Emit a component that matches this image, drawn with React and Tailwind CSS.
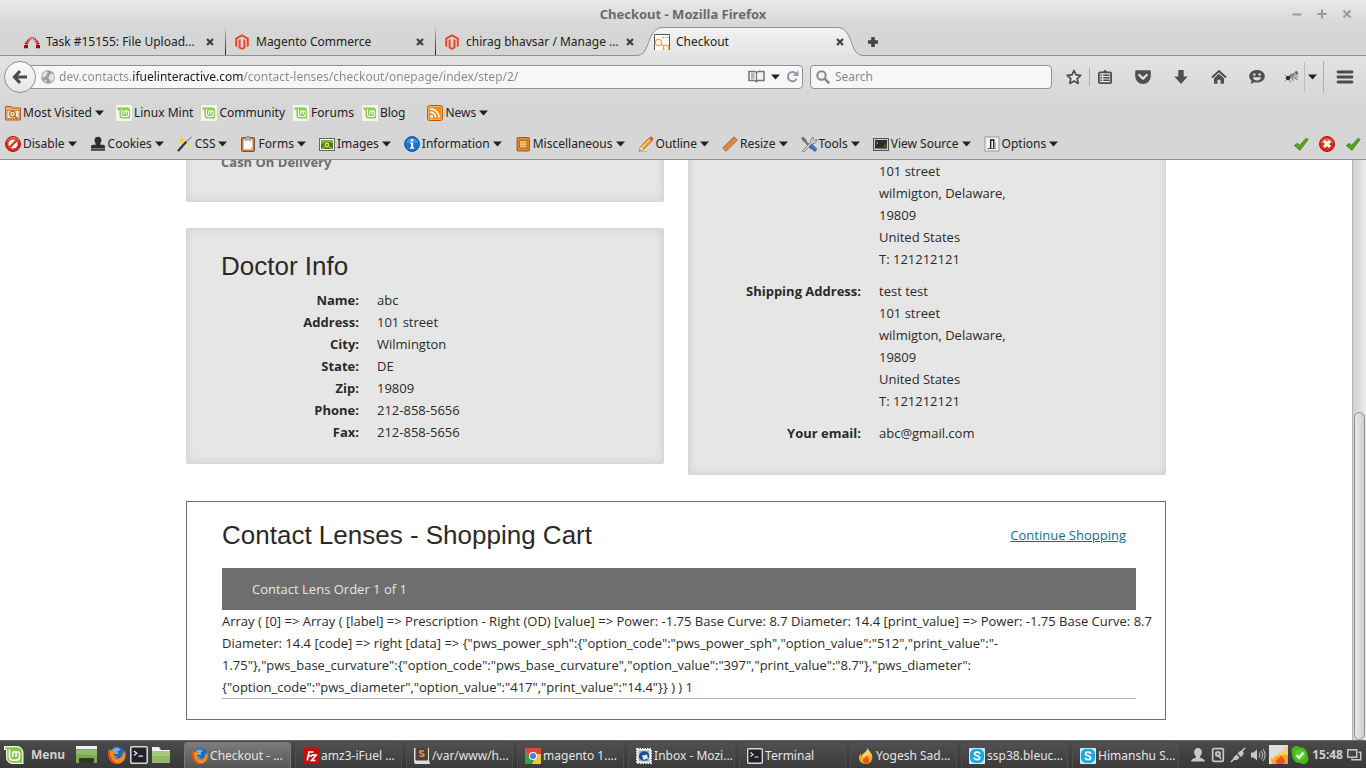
import React from "react";

const Svg = ({ size = 16, box = 16, className = "", children }) => (
  <svg width={size} height={size} viewBox={`0 0 ${box} ${box}`} className={`shrink-0 ${className}`} aria-hidden="true">
    {children}
  </svg>
);

/* ---------- small shared glyphs ---------- */
const Caret = () => (
  <svg width="9" height="6" viewBox="0 0 9 6" className="shrink-0" aria-hidden="true">
    <path d="M0 0.5h9L4.5 5.5z" fill="#222" />
  </svg>
);
const CloseGlyph = () => (
  <Svg size={10} box={10}>
    <path d="M2 2l6 6M8 2L2 8" stroke="#444" strokeWidth="2.4" />
  </Svg>
);

/* ---------- tab icons ---------- */
const RedmineIcon = () => (
  <Svg>
    <path d="M3.800 5.300L5 4l1.400 2.200-.9.800zM6.200 3.200l1.300-.5.200 2.700-.8.300zM8.700 2.700l1.500.3-.8 2.600-.8-.2zM11.200 3.700l1.300 1.200-1.800 1.900-.8-.7z" fill="#d8232a" />
    <path d="M2.200 7.300l1.200-1.600 2 1.800-.8 1.300zM13.100 5.700l1.200 1.700-2.500 1.500-.7-1.300z" fill="#c3161c" />
    <path d="M.6 10l1.200-2.200 2.400 1.500-.6 1.200zM14.600 8l.9 2-2.900.8-.5-1.300z" fill="#b0090f" />
    <path d="M0 11h4v3.200H0zM12 11h4v3.200h-4z" fill="#a3070d" />
  </Svg>
);
const MagentoIcon = () => (
  <Svg>
    <path d="M8 0.200l6.800 3.900v8L12.800 13.300V5.300L8 2.500 3.200 5.300v8L1.200 12.100v-8z" fill="#ee4623" />
    <path d="M4.600 6.100l2-1.200v8.200L8 14l1.400-.9V4.900l2 1.200v8L8 16l-3.400-1.900z" fill="#ee4623" />
  </Svg>
);
const CheckoutIcon = () => (
  <Svg>
    <rect width="16" height="16" fill="#fff" />
    <path d="M.5 16V.5h15V16" fill="none" stroke="#555" />
    <g fill="none" stroke="#f4a455" strokeWidth="1.300">
      <circle cx="4.500" cy="8.500" r="3.200" />
      <circle cx="12" cy="14" r="2.800" />
      <path d="M7 10.500l3 1.500" />
    </g>
    <path d="M8 3.500h2M11 3.500h1M13 3.500h1.500" stroke="#999" />
  </Svg>
);

/* ---------- bookmark icons ---------- */
const MostVisitedIcon = () => (
  <Svg>
    <path d="M.5 1.500h6l1 1.500h8v12H.5z" fill="#f0a868" stroke="#b3611f" />
    <path d="M2 5.500h12v8H2z" fill="#fbe6cd" stroke="#c9762f" strokeWidth=".8" />
    <circle cx="7.500" cy="9" r="2.800" fill="#fff3e2" stroke="#b9651f" strokeWidth="1.200" />
    <circle cx="7.500" cy="9" r="1" fill="#c9762f" />
    <path d="M9.600 11l2.700 2.600" stroke="#b9651f" strokeWidth="1.600" />
  </Svg>
);
const MintIcon = () => (
  <Svg>
    <rect width="16" height="16" fill="#f4f6ee" />
    <path d="M1.500 2.500h9.500a3 3 0 0 1 3 3v8H6.500a3 3 0 0 1-3-3V5H1.500z" fill="#8ccb4c" />
    <path d="M5.500 4v5.500a2 2 0 0 0 2 2h3a2 2 0 0 0 2-2V7a1.200 1.200 0 0 0-2.400 0v2.500M10.100 7A1.200 1.200 0 0 0 7.700 7v2.500" fill="none" stroke="#fff" strokeWidth="1.100" />
  </Svg>
);
const RssIcon = () => (
  <Svg>
    <rect x=".5" y=".5" width="15" height="15" rx="2" fill="#f28a1d" stroke="#b9590c" />
    <rect x="1.500" y="1.500" width="13" height="13" rx="1" fill="none" stroke="#f9b566" />
    <circle cx="4.600" cy="11.400" r="1.500" fill="#fff" />
    <path d="M3.200 7.200a5.600 5.600 0 0 1 5.600 5.600M3.200 3.900a8.900 8.900 0 0 1 8.900 8.900" fill="none" stroke="#fff" strokeWidth="1.700" />
  </Svg>
);

/* ---------- developer toolbar icons ---------- */
const DisableIcon = () => (
  <Svg>
    <circle cx="8" cy="8" r="7.500" fill="#d8301d" stroke="#a51508" />
    <circle cx="8" cy="8" r="4.600" fill="#fff" />
    <path d="M4.200 11.800l7.600-7.600" stroke="#e0412b" strokeWidth="2.600" />
    <path d="M2 5.500a6.500 6.500 0 0 1 12 0" fill="none" stroke="#f4836f" strokeWidth="1" />
  </Svg>
);
const CookiesIcon = () => (
  <Svg>
    <path d="M8 .8c2.200 0 3.500 1.500 3.500 3.400 0 1.800-1.300 2.900-1.300 4.500h2.600c1.400 0 2.200.8 2.200 2.200v1.600H1v-1.600c0-1.400.8-2.200 2.200-2.200h2.600c0-1.600-1.300-2.700-1.300-4.500C4.500 2.300 5.800.8 8 .8z" fill="#2d2d2d" />
    <path d="M1 13h14v1.800H1z" fill="#444" />
  </Svg>
);
const CssIcon = () => (
  <Svg>
    <path d="M1 15L9.500 5.500" stroke="#333" strokeWidth="2.200" />
    <path d="M9 6l5.500-5" stroke="#9a9a9a" strokeWidth="1.600" />
    <path d="M5 1l.9 2.400L8.500 4l-2.200 1.300L6 8 4.400 5.900 1.800 6.500 3.400 4.200 2 2l2.400.7z" fill="#f5d327" />
    <path d="M12.500 6l.7 2 2 .5-1.700 1.100.1 2.100-1.600-1.300-2 .6.8-2-1.200-1.600 2.100-.1z" fill="#f2dc62" />
  </Svg>
);
const FormsIcon = () => (
  <Svg>
    <rect x="1.500" y="1.500" width="13" height="14" rx="1" fill="#c77a35" stroke="#8c4f1b" />
    <path d="M3.500 3h9v10.500h-9z" fill="#fafafa" />
    <path d="M9 13.500l3.500-3.500v3.500z" fill="#c9c9c9" />
    <path d="M5 1.800h2V.5h2v1.300h2v2.400H5z" fill="#bbb" stroke="#777" strokeWidth=".6" />
  </Svg>
);
const ImagesIcon = () => (
  <Svg>
    <rect x=".5" y="2.500" width="15" height="12" fill="#fff" stroke="#666" />
    <rect x="2" y="4" width="12" height="9" fill="#4d7a1c" />
    <path d="M2 4h12v3L9 6 2 8z" fill="#86b04c" />
    <circle cx="8" cy="9" r="2.400" fill="#e7dc4f" />
    <circle cx="8" cy="9" r=".9" fill="#6b5416" />
    <path d="M3 12.500l3-1.500M13 12.500l-3-1.500" stroke="#b3d77c" />
  </Svg>
);
const InfoIcon = () => (
  <Svg>
    <circle cx="8" cy="8" r="7.400" fill="#1b75d0" stroke="#0f4f9c" />
    <path d="M1.800 7a6.400 6.400 0 0 1 12.400 0z" fill="#58a4ea" opacity=".6" />
    <circle cx="8" cy="4.300" r="1.300" fill="#fff" />
    <path d="M6.300 6.500h2.900v4.700h1v1.500H6v-1.500h1V8h-.7z" fill="#fff" />
  </Svg>
);
const MiscIcon = () => (
  <Svg>
    <rect x="2" y="1.500" width="12.500" height="13.500" rx="1" fill="#d98a2b" stroke="#a05c10" />
    <rect x="4.500" y="4.500" width="7.500" height="7.500" fill="#f3c477" stroke="#b26d1c" />
    <path d="M5.500 7h5.500M5.500 9.500h5.500" stroke="#d99a45" />
  </Svg>
);
const OutlineIcon = () => (
  <Svg>
    <path d="M2.500 10.500L11 2l3 3-8.500 8.500-4.200 1.300z" fill="#f39a2b" stroke="#b5651a" strokeWidth=".7" />
    <path d="M4 11.500L12 3.500" stroke="#fbd18b" strokeWidth="1.200" />
    <path d="M11 2l1.500-1.300c1-.6 3.200 1.300 2.600 2.600L14 5z" fill="#e04a52" />
    <path d="M2.500 10.500l3 3-4.200 1.300z" fill="#f4dfc1" />
    <path d="M1.300 14.800l1.500-.5-1-1z" fill="#333" />
    <path d="M0 15.500h9" stroke="#aaa" strokeWidth=".7" />
  </Svg>
);
const ResizeIcon = () => (
  <Svg>
    <path d="M.7 12L12 .9l3.300 3.200L4 15.200z" fill="#d98f4d" stroke="#a8642a" />
    <path d="M3 10.500l1.200 1.200M5 8.500l1.200 1.200M7 6.500l1.200 1.200M9 4.500l1.200 1.200M11 2.500l1.200 1.200" stroke="#8f5420" strokeWidth=".7" />
  </Svg>
);
const ToolsIcon = () => (
  <Svg>
    <path d="M2 .8l3 3 .2 1.600 6.300 6.300-1.600 1.600L3.600 5.700 2.500 5.300.6 2.400z" fill="#777" stroke="#444" strokeWidth=".5" />
    <path d="M1.500 14.500L9.700 6.300c-.4-2 .4-4 2.300-5l.3 2.500 1.500.8 2-1.300c.3 2.500-1.800 4.800-4.500 4.300L3.200 15.700c-1.200.5-2.200-.2-1.700-1.200z" fill="#d3d3d3" stroke="#666" strokeWidth=".7" />
    <path d="M8.800 10l2-2 4.500 4.500c1 1.500-1 3.500-2.500 2.500z" fill="#3576c9" stroke="#1c4e93" strokeWidth=".6" />
  </Svg>
);
const SourceIcon = () => (
  <Svg>
    <rect x=".5" y="2.500" width="15" height="12" fill="#ccc" stroke="#555" />
    <rect x="2" y="4" width="12" height="8.500" fill="#26331f" />
    <path d="M3.500 6l1.500 1-1.500 1" fill="none" stroke="#7ed957" strokeWidth=".8" />
    <path d="M8 12.500L14 6v6.500z" fill="#3d5230" />
  </Svg>
);
const OptionsIcon = () => (
  <Svg>
    <rect x="1" y="1" width="14" height="14" fill="#f1f1f1" stroke="#999" />
    <path d="M6.700 12.500V4h3.100v8.500" fill="#fff" stroke="#111" strokeWidth="1.300" />
    <path d="M3.500 12.500h8" stroke="#555" />
    <path d="M10.500 6v6.500H12V6z" fill="#bbb" />
  </Svg>
);
const CheckIcon = () => (
  <Svg>
    <path d="M1.500 9.500l3-2.200 2 2.200 7-7.500 1.500 1.500L7 14.300z" fill="#5fa617" stroke="#35700b" strokeWidth=".8" />
  </Svg>
);
const ErrorIcon = () => (
  <Svg>
    <circle cx="8" cy="8" r="7.500" fill="#dd2c14" stroke="#aa1809" />
    <path d="M1.800 7a6.400 6.400 0 0 1 12.400 0z" fill="#f58a6d" opacity=".65" />
    <path d="M5 5l6 6M11 5l-6 6" stroke="#fff" strokeWidth="3" />
  </Svg>
);

/* ---------- navigation icons ---------- */
const GlobeIcon = () => (
  <Svg size={14}>
    <circle cx="8" cy="8" r="7.800" fill="#9d9d9d" />
    <path d="M3 2.800L7 1.500l1 2-2 1 .5 2-2.500 1-.5 2L1 7.500zM9.500 6l3-2.500 2.500 3-.5 4-3 3.500-1-3-2-1zM3.500 11l3 1v2.500L4 13z" fill="#e3e3e3" />
  </Svg>
);
const ReaderIcon = () => (
  <svg width="17" height="13" viewBox="0 0 17 13" aria-hidden="true">
    <path d="M1 1.500h6l1.500 1L10 1.500h6v9h-6l-1.500 1.200L7 10.500H1z" fill="#f5f5f5" stroke="#777" strokeWidth="1.500" />
    <path d="M8.500 2.500v9M3 4h3.500M3 6h3.500M3 8h3.500" stroke="#777" strokeWidth="1.200" />
  </svg>
);
const ReloadIcon = () => (
  <Svg size={13} box={14}>
    <path d="M11.500 9.500a5 5 0 1 1-.8-5.800" fill="none" stroke="#8a9aa8" strokeWidth="2.200" />
    <path d="M13.300 0.500v6H7.500z" fill="#8a9aa8" />
  </Svg>
);
const MagnifierIcon = () => (
  <Svg size={14} box={14}>
    <circle cx="5.500" cy="5.500" r="4.200" fill="none" stroke="#888" strokeWidth="2" />
    <path d="M8.700 8.700l4.500 4.500" stroke="#888" strokeWidth="2.600" />
  </Svg>
);
const StarIcon = () => (
  <Svg>
    <path d="M8 1.500l2 4.400 4.700.5-3.500 3.200 1 4.800L8 12l-4.200 2.400 1-4.800L1.300 6.400 6 5.900z" fill="#e8e8e8" stroke="#4c4c4c" strokeWidth="1.700" strokeLinejoin="round" />
  </Svg>
);
const ListIcon = () => (
  <Svg>
    <path d="M5.500 3L8 .8 10.500 3z" fill="#4c4c4c" />
    <rect x="1.900" y="3.400" width="12.200" height="10.700" rx="1" fill="#e6e6e6" stroke="#4c4c4c" strokeWidth="1.800" />
    <path d="M3.500 6.300h1.500M3.500 8.800h1.500M3.500 11.300h1.500M6.300 6.300h6.300M6.300 8.800h6.300M6.300 11.300h6.300" stroke="#4c4c4c" strokeWidth="1.500" />
  </Svg>
);
const PocketIcon = () => (
  <Svg>
    <path d="M1.500 1.200h13a1.300 1.300 0 0 1 1.300 1.300v4.800a7.800 7.800 0 0 1-15.600 0V2.500a1.300 1.300 0 0 1 1.300-1.300z" fill="#505050" />
    <path d="M4.200 6l3.800 3.600L11.800 6" fill="none" stroke="#e6e6e6" strokeWidth="2.200" strokeLinecap="round" strokeLinejoin="round" />
  </Svg>
);
const DownloadIcon = () => (
  <Svg>
    <path d="M5.300 1h5.400v6.500h4L8 15 1.300 7.500h4z" fill="#505050" />
  </Svg>
);
const HomeIcon = () => (
  <Svg>
    <path d="M1 8.500L8 2l7 6.500" fill="none" stroke="#4c4c4c" strokeWidth="1.900" />
    <path d="M3 9.300l5-4.600 5 4.600v5.500H9.500v-4h-3v4H3z" fill="#505050" />
  </Svg>
);
const ChatIcon = () => (
  <Svg>
    <path d="M8 1c4.500 0 7.800 2.600 7.800 6.300S12.500 13.600 8 13.600c-.9 0-1.800-.1-2.600-.3L1.600 15l1-3.200C1.100 10.700.2 9.100.2 7.300.2 3.600 3.500 1 8 1z" fill="#505050" />
    <circle cx="5.300" cy="5.500" r="1.200" fill="#e0e0e0" />
    <circle cx="10.700" cy="5.500" r="1.200" fill="#e0e0e0" />
    <path d="M3.800 8.300h8.400C11.500 10.500 10 11.400 8 11.400S4.500 10.500 3.800 8.300z" fill="#e0e0e0" />
  </Svg>
);
const FlyIcon = () => (
  <Svg>
    <ellipse cx="8" cy="6.500" rx="3" ry="1.800" fill="#808080" transform="rotate(-25 8 6.500)" />
    <ellipse cx="10.500" cy="8.500" rx="4" ry="1.400" fill="#aaa" transform="rotate(-15 10.500 8.500)" />
    <circle cx="4" cy="9" r="2.300" fill="#2e2e2e" />
    <circle cx="12.500" cy="3.500" r="1.500" fill="#666" />
    <path d="M9.500 5l3-3M11 6l3.500-1M2.500 7.500L.5 5.500M8 9l1.500 3M11 9l3 2M5.500 10.500l1 3M2.500 10.500L.8 12.500" stroke="#777" fill="none" strokeWidth=".9" />
  </Svg>
);
const MenuIcon = () => (
  <Svg size={18} box={18}>
    <path d="M2 4h14M2 9h14M2 14h14" stroke="#4c4c4c" strokeWidth="2.800" strokeLinecap="round" />
  </Svg>
);

/* ---------- taskbar icons ---------- */
const FirefoxIcon = ({ size = 16 }) => (
  <Svg size={size}>
    <circle cx="8.300" cy="7.300" r="7" fill="#2467b5" />
    <path d="M4 3c2-2 5.500-2 7 0L8.500 5l1 2L6 7z" fill="#6bb3e8" />
    <path d="M1.200 2.200C-.5 6-.2 10.500 2.500 13.500c3.500 3.500 9 3 11.700-.8 1.900-2.800 2-6.600.6-9.500.2 2-.1 3-.5 3.800-.3-1-.8-1.800-1.300-2.300.4 2 .1 3.300-.9 4.700-1.500 2.200-4.700 2.500-6.800.9 1.500.3 2.600-.1 3.500-1.100-1.800.3-3-.2-3.600-1.400-.3-1 .2-1.800 1.500-1.900L8.200 5C6.500 5 5.200 4.500 4.200 3.600c-1 .1-1.700.3-2.200.7z" fill="#f28c1e" />
    <path d="M1.200 2.200C-.5 6-.2 10.500 2.500 13.500c2 2 4.700 2.700 7.200 2.200C5 15 1.500 11 1.700 5z" fill="#d9481c" />
  </Svg>
);
const TerminalIcon = ({ size = 16 }) => (
  <Svg size={size}>
    <rect x=".7" y=".7" width="14.600" height="14.600" rx="1" fill="#241f2b" stroke="#d5d5d5" strokeWidth="1.400" />
    <path d="M3.500 4.500l2.500 2-2.500 2M7.500 9h4" fill="none" stroke="#eee" strokeWidth="1.200" />
  </Svg>
);
const FolderIcon = () => (
  <Svg size={18} box={18}>
    <path d="M0 1h7l2 3h9v5H0z" fill="#f1f1ea" />
    <path d="M0 5h18v12H0z" fill="#91b963" />
    <path d="M0 5h18v5H0z" fill="#a5c87c" />
  </Svg>
);
const DesktopIcon = () => (
  <Svg size={21} box={21}>
    <rect x="0" y="2" width="21" height="17" fill="#7fa651" />
    <rect x="0" y="2" width="21" height="3" fill="#f1f1f1" />
    <path d="M0 6h21v6L0 10z" fill="#93b868" />
    <rect x="3" y="14" width="15" height="5" rx="1" fill="#2c3a1e" />
  </Svg>
);
const MintMenuIcon = () => (
  <Svg size={20} box={20}>
    <path d="M0 1h13a6.500 6.500 0 0 1 6.500 6.500V19H8.500A6.500 6.500 0 0 1 2 12.500V5H0z" fill="#f0f5e8" />
    <path d="M1.500 2.300H13a5.200 5.200 0 0 1 5.200 5.200v10.200H8.500a5.200 5.200 0 0 1-5.200-5.200V4.500H1.500z" fill="#86c44b" />
    <path d="M5.500 4.500v7.500a3.200 3.200 0 0 0 3.200 3.200h3.600a3.200 3.200 0 0 0 3.200-3.200V8.500a1.700 1.700 0 0 0-3.400 0V12M12.100 8.500a1.700 1.700 0 0 0-3.400 0V12" fill="none" stroke="#fff" strokeWidth="1.600" />
  </Svg>
);
const FileZillaIcon = () => (
  <Svg>
    <rect width="16" height="16" rx="1.500" fill="#c40f0f" />
    <path d="M4.300 12.500L6 4h4.500M5.200 8h3.800M8.500 7.200h4.500L8.500 12.500h4" fill="none" stroke="#fff" strokeWidth="1.700" />
  </Svg>
);
const SublimeIcon = () => (
  <Svg>
    <path d="M0 0h15v12l1 4H1L0 14z" fill="#ddd" />
    <rect x="1.500" y="0" width="12.500" height="12.500" rx="1" fill="#48433f" />
    <path d="M10 3.300c-2.500-1.200-4.500-.4-4.300 1 .3 1.500 4.200 1 4.200 2.700 0 1.400-2.500 1.800-4.500.6" fill="none" stroke="#f5942b" strokeWidth="1.600" />
  </Svg>
);
const ChromeIcon = () => (
  <Svg>
    <rect width="16" height="16" rx="1" fill="#f2c62f" />
    <path d="M0 0h16v6H8L4.500 10 0 3z" fill="#dd4535" />
    <path d="M0 3l4.500 7L9 12l-2 4H0z" fill="#33a250" />
    <circle cx="8" cy="8" r="4" fill="#fff" />
    <circle cx="8" cy="8" r="3" fill="#3e7fe0" />
  </Svg>
);
const MailIcon = () => (
  <Svg>
    <rect x="1" y="1" width="14" height="14" fill="#f3f3ee" stroke="#f3f3ee" strokeWidth="2" strokeDasharray="1.500 1" />
    <rect x="2.500" y="2.500" width="11" height="11" fill="#8ab4dc" />
    <path d="M3 10c-.5-4 2-7 5.500-6.800C12 3.500 13.500 6 13 9l-2 3.500H6z" fill="#1c4a8c" />
    <path d="M6 7.500l5-1 1 4-4.500 1.500z" fill="#f2e6c6" />
  </Svg>
);
const FlameIcon = () => (
  <Svg>
    <path d="M9.500 0c.5 2.500 4.800 5 4.800 9.500 0 3.800-2.800 6.500-6.500 6.500S1 13.500 1 10c0-2 .8-3.500 2-4.500 0 1.200.4 2 1.200 2.500C4.500 5 9.500 4 9.500 0z" fill="#f7a52c" />
    <path d="M9.500 0c.5 2.500 4.800 5 4.800 9.500-1-2-2.500-2.500-4-2.500C8 7 6.500 8.500 6 10 4.500 9.500 4 8.500 4.200 8 4.500 5 9.500 4 9.500 0z" fill="#ffd265" />
    <path d="M8.500 7.500c.2 1.500 2.800 2.500 2.800 5 0 1.800-1.300 3-3.300 3s-3.300-1.200-3.300-2.900c0-2.100 3.300-2.600 3.800-5.100z" fill="#e35b12" />
  </Svg>
);
const FlameTrayIcon = () => (
  <Svg size={19} box={19}>
    <rect width="19" height="19" fill="#dedede" />
    <path d="M16.500 0c1.200 3.500-1.200 5.500-4.200 7.500C8 10 4.500 10 4.500 15c-1-.8-1.300-2-1.300-3C1.500 14 1.800 17 3.500 19H19V5c-.6-1.800-1.500-3.500-2.500-5z" fill="#f7a52c" />
    <path d="M16.500 0c1.200 3.500-1.200 5.500-4.200 7.500C9 9.500 6 10 5 13c3-3 8.500-3.500 14-3V5c-.6-1.800-1.500-3.500-2.500-5z" fill="#ffd265" />
    <path d="M12 10.500c1 2.300 4 3 4 5.500 0 1.300-.6 2.300-1.500 3H8.500C7.500 18.300 7 17.500 7 16.500c0-2.700 4.500-3 5-6z" fill="#e35b12" />
  </Svg>
);
const SkypeIcon = () => (
  <Svg>
    <rect width="16" height="16" rx="1" fill="#c9edfb" />
    <rect x="1" y="1" width="14" height="14" rx="5" fill="#1ba9e5" />
    <path d="M10.600 5.300C9.500 3.800 5.600 3.700 5.600 5.900c0 2.400 5 1.300 5 3.900 0 2.400-4.400 2.300-5.400.4" fill="none" stroke="#fff" strokeWidth="1.800" strokeLinecap="round" />
  </Svg>
);
const UserTrayIcon = () => (
  <Svg>
    <path d="M8 1c2.400 0 3.900 1.700 3.900 4 0 1.900-1 3.200-1.700 4.200v1.500c1.500.8 4.300 1 4.800 3.800H1c.5-2.800 3.300-3 4.800-3.800V9.200C5.100 8.200 4.100 6.900 4.100 5c0-2.300 1.500-4 3.900-4z" fill="#c8c8c8" />
  </Svg>
);
const DiskTrayIcon = () => (
  <Svg>
    <rect x="2.700" y="1.700" width="10.600" height="12.600" rx="1" fill="none" stroke="#c8c8c8" strokeWidth="1.700" />
    <circle cx="8" cy="7" r="3" fill="#c8c8c8" />
    <circle cx="8" cy="7" r="1" fill="#444" />
    <path d="M8 8l3 4" stroke="#c8c8c8" strokeWidth="1.500" />
  </Svg>
);
const PlugTrayIcon = () => (
  <Svg>
    <path d="M1 15l4-4M11 5l4-4" stroke="#c8c8c8" strokeWidth="1.500" />
    <path d="M3.500 10.500l3-3 3 3-2 2c-1.500 1-3.500.5-4 0zM7.500 6.500l2-2c1.500-1 3-.7 3.500 0 .7.700.8 2.200 0 3.500l-2 2z" fill="#c8c8c8" />
  </Svg>
);
const SoundTrayIcon = () => (
  <Svg>
    <path d="M1 5.500h2.500L7 2.500v11L3.500 10.500H1z" fill="#c8c8c8" />
    <path d="M9 5.500c1 1.500 1 3.500 0 5M11 3.800c2 2.500 2 6 0 8.400M13 2.200c2.600 3.500 2.600 8 0 11.600" fill="none" stroke="#b0b0b0" strokeWidth="1.200" />
  </Svg>
);
const SkypeTrayIcon = () => (
  <Svg size={18} box={18}>
    <path d="M5 0c1.500 0 2.500.5 3 1 5-.5 9 3.500 8.500 8.500 2 3.500 1 7-3 8.500-1.500.2-3-.2-4-1C4.500 17.300.8 13.500 1.300 8.500-.5 4.500.5 1 5 0z" fill="#45b71f" />
    <circle cx="9" cy="9" r="5.500" fill="#55cc2c" />
    <path d="M5.500 9.200l2.500 2.500 4.500-5" fill="none" stroke="#fff" strokeWidth="2.200" />
  </Svg>
);
const WindowsTrayIcon = () => (
  <Svg>
    <rect x="1.800" y="2.800" width="8.900" height="7.400" fill="none" stroke="#c8c8c8" strokeWidth="1.500" />
    <path d="M12.500 5.300h2.200v7.400H6V11.500" fill="none" stroke="#c8c8c8" strokeWidth="1.500" />
  </Svg>
);

/* ---------- data ---------- */
const tabs = [
  { icon: RedmineIcon, title: "Task #15155: File Upload..." },
  { icon: MagentoIcon, title: "Magento Commerce" },
  { icon: MagentoIcon, title: "chirag bhavsar / Manage ..." },
  { icon: CheckoutIcon, title: "Checkout", active: true },
];

const devTools = [
  [DisableIcon, "Disable"],
  [CookiesIcon, "Cookies"],
  [CssIcon, "CSS"],
  [FormsIcon, "Forms"],
  [ImagesIcon, "Images"],
  [InfoIcon, "Information"],
  [MiscIcon, "Miscellaneous"],
  [OutlineIcon, "Outline"],
  [ResizeIcon, "Resize"],
  [ToolsIcon, "Tools"],
  [SourceIcon, "View Source"],
  [OptionsIcon, "Options"],
];

const navButtons = [
  [PocketIcon, "Pocket"],
  [DownloadIcon, "Downloads"],
  [HomeIcon, "Home"],
  [ChatIcon, "Hello"],
];

const doctor = [
  ["Name:", "abc"],
  ["Address:", "101 street"],
  ["City:", "Wilmington"],
  ["State:", "DE"],
  ["Zip:", "19809"],
  ["Phone:", "212-858-5656"],
  ["Fax:", "212-858-5656"],
];

const address = ["101 street", "wilmigton, Delaware,", "19809", "United States", "T: 121212121"];

const orderDump = [
  "Array ( [0] => Array ( [label] => Prescription - Right (OD) [value] => Power: -1.75 Base Curve: 8.7 Diameter: 14.4 [print_value] => Power: -1.75 Base Curve: 8.7",
  'Diameter: 14.4 [code] => right [data] => {"pws_power_sph":{"option_code":"pws_power_sph","option_value":"512","print_value":"-',
  '1.75"},"pws_base_curvature":{"option_code":"pws_base_curvature","option_value":"397","print_value":"8.7"},"pws_diameter":',
  '{"option_code":"pws_diameter","option_value":"417","print_value":"14.4"}} ) ) 1',
];

const tasks = [
  [FirefoxIcon, "Checkout - ...", true],
  [FileZillaIcon, "amz3-iFuel ..."],
  [SublimeIcon, "/var/www/h..."],
  [ChromeIcon, "magento 1...."],
  [MailIcon, "Inbox - Mozi..."],
  [TerminalIcon, "Terminal"],
  [FlameIcon, "Yogesh Sad..."],
  [SkypeIcon, "ssp38.bleuc..."],
  [SkypeIcon, "Himanshu S..."],
];

/* ---------- browser chrome ---------- */
function TitleBar() {
  return (
    <div className="grid h-7 shrink-0 grid-cols-[1fr_auto_1fr] items-center bg-linear-to-b from-[#e8e8e8] to-[#d6d6d6]">
      <span />
      <h1 className="pt-px text-[13px] font-bold text-[#6a6a6a]">Checkout - Mozilla Firefox</h1>
      <div className="flex justify-end gap-[13px] pr-[13px]">
        {[
          ["Minimize", "M1.500 6.500h9"],
          ["Maximize", "M6 1.500v9M1.500 6h9"],
          ["Close", "M2.500 2.500l7 7M9.500 2.500l-7 7"],
        ].map(([name, d]) => (
          <button key={name} aria-label={name}>
            <Svg size={12} box={12}>
              <path d={d} stroke="#9a9a9a" strokeWidth="2" />
            </Svg>
          </button>
        ))}
      </div>
    </div>
  );
}

function Tabs() {
  return (
    <div role="tablist" className="flex h-7 shrink-0 border-b border-[#919191] bg-[#d6d6d6] pl-[15px]">
      {tabs.map(({ icon: Icon, title, active }, i) => (
        <div key={title} className="relative flex w-[210px] items-center pl-[9px] pr-[10px]">
          {active && (
            <svg className="absolute -left-2 -top-px h-[29px] w-[226px]" viewBox="0 0 226 29" aria-hidden="true">
              <defs>
                <linearGradient id="tab" x1="0" y1="0" x2="0" y2="1">
                  <stop offset="0" stopColor="#f3f3f3" />
                  <stop offset="1" stopColor="#e3e3e3" />
                </linearGradient>
              </defs>
              <path d="M0 28.500C14 28.500 9 .5 26 .5H200C217 .5 212 28.500 226 28.500V29H0z" fill="url(#tab)" />
              <path d="M0 28.500C14 28.500 9 .5 26 .5H200C217 .5 212 28.500 226 28.500" fill="none" stroke="#919191" />
            </svg>
          )}
          {i < 2 && <span className="absolute -right-px top-0 h-full w-px bg-linear-to-b from-[#c8c8c8] to-[#222]" />}
          <button role="tab" aria-selected={!!active} className="relative flex min-w-0 flex-1 items-center gap-[6px]">
            <Icon />
            <span className="whitespace-nowrap">{title}</span>
          </button>
          <button aria-label={`Close ${title}`} className="relative">
            <CloseGlyph />
          </button>
        </div>
      ))}
      <button aria-label="New tab" className="ml-3">
        <Svg size={12} box={12}>
          <path d="M6 1v10M1 6h10" stroke="#444" strokeWidth="3.600" />
        </Svg>
      </button>
    </div>
  );
}

function NavBar() {
  return (
    <div className="flex h-[41px] shrink-0 items-center bg-linear-to-b from-[#e3e3e3] to-[#d8d8d8]">
      <button
        aria-label="Back"
        className="relative z-10 ml-1 flex size-8 shrink-0 items-center justify-center rounded-full border border-[#8f8f8f] bg-linear-to-b from-[#fafafa] to-[#e6e6e6]"
      >
        <Svg>
          <path d="M8 2L2.500 8 8 14M3 8h12" fill="none" stroke="#4c4c4c" strokeWidth="3.200" />
        </Svg>
      </button>
      <div className="-ml-2 flex h-6 flex-1 items-center rounded-r-sm border border-[#919191] bg-[#f7f7f7] pl-3 pr-[3px]">
        <GlobeIcon />
        <input
          aria-label="Address"
          defaultValue="dev.contacts.ifuelinteractive.com/contact-lenses/checkout/onepage/index/step/2/"
          className="ml-1 min-w-0 flex-1 bg-[linear-gradient(to_right,#8a8a8a_73px,#1a1a1a_73px,#1a1a1a_184px,#8a8a8a_184px)] bg-clip-text text-transparent outline-none"
        />
        <div className="flex items-center gap-[6px]">
          <button aria-label="Reader view"><ReaderIcon /></button>
          <button aria-label="History"><Caret /></button>
          <button aria-label="Reload"><ReloadIcon /></button>
        </div>
      </div>
      <label className="ml-[7px] flex h-6 w-[242px] items-center gap-[5px] rounded-sm border border-[#919191] bg-[#f7f7f7] px-[5px]">
        <MagnifierIcon />
        <input aria-label="Search" placeholder="Search" className="min-w-0 flex-1 outline-none placeholder:text-[#8a8a8a]" />
      </label>
      <button aria-label="Bookmark this page" className="ml-[7px] flex w-[30px] justify-center"><StarIcon /></button>
      <span className="h-[18px] w-px bg-[#adadad]" />
      <div className="flex gap-2">
        <button aria-label="Bookmarks" className="flex w-[30px] justify-center"><ListIcon /></button>
        {navButtons.map(([Icon, name]) => (
          <button key={name} aria-label={name} className="flex w-[30px] justify-center"><Icon /></button>
        ))}
        <button aria-label="Firebug" className="flex w-6 justify-center"><FlyIcon /></button>
      </div>
      <span className="h-[30px] w-px bg-[#bdbdbd]" />
      <button aria-label="Firebug options" className="flex w-[14px] justify-center"><Caret /></button>
      <span className="ml-1 h-8 w-px bg-[#b0b0b0]" />
      <button aria-label="Open menu" className="flex w-[42px] justify-center"><MenuIcon /></button>
    </div>
  );
}

const Bookmark = ({ icon: Icon, label }) => (
  <a href="#" className="flex items-center gap-[2px]">
    <Icon />
    {label}
  </a>
);

const MenuButton = ({ icon: Icon, label }) => (
  <button className="flex items-center gap-[2px] whitespace-nowrap">
    <Icon />
    <span className="mr-px">{label}</span>
    <Caret />
  </button>
);

function Toolbars() {
  return (
    <>
      <nav className="flex h-[31px] shrink-0 items-center bg-[#d6d6d6] pl-[5px]">
        <MenuButton icon={MostVisitedIcon} label="Most Visited" />
        <div className="ml-3 mr-[22px] flex gap-2">
          {["Linux Mint", "Community", "Forums", "Blog"].map((label) => (
            <Bookmark key={label} icon={MintIcon} label={label} />
          ))}
        </div>
        <MenuButton icon={RssIcon} label="News" />
      </nav>
      <div className="flex h-8 shrink-0 items-center justify-between border-b border-[#919191] bg-[#d6d6d6] pl-[5px] pr-[5px]">
        <div className="flex gap-[13px]">
          {devTools.map(([icon, label]) => (
            <MenuButton key={label} icon={icon} label={label} />
          ))}
        </div>
        <div className="flex gap-[10px]">
          <CheckIcon />
          <ErrorIcon />
          <CheckIcon />
        </div>
      </div>
    </>
  );
}

/* ---------- page ---------- */
const cardClass = "rounded-xs border border-[#d6d6d6] bg-[#e6e6e6] px-[34px] shadow-[inset_0_0_10px_#d0d0d0]";

const Term = ({ label, children }) => (
  <div className="grid grid-cols-[138px_1fr] gap-[18px]">
    <dt className="text-right font-bold">{label}</dt>
    <dd>{children}</dd>
  </div>
);

const Lines = ({ items }) => items.map((t) => <div key={t}>{t}</div>);

function Page() {
  return (
    <main className="min-w-0 flex-1 overflow-hidden bg-white font-['Open_Sans',sans-serif] text-[13px] leading-[22px] text-[#2a2a2a]">
      <div className="mx-auto -mt-8 max-w-[980px]">
        <div className="grid grid-cols-2 items-start gap-6">
          <div className="flex flex-col gap-[26px]">
            <section className={`${cardClass} pb-7 pt-[22px] font-bold text-[#6e6e6e]`}>Cash On Delivery</section>
            <section className={`${cardClass} py-5`}>
              <h2 className="mb-[6px] font-['Liberation_Sans',sans-serif] text-[26px] leading-[34px]">Doctor Info</h2>
              <dl>
                {doctor.map(([label, value]) => (
                  <Term key={label} label={label}>{value}</Term>
                ))}
              </dl>
            </section>
          </div>
          <section className={`${cardClass} pb-[30px] pt-[31px]`}>
            <dl className="flex flex-col gap-[10px]">
              <Term><Lines items={address} /></Term>
              <Term label="Shipping Address:"><Lines items={["test test", ...address]} /></Term>
              <Term label="Your email:">abc@gmail.com</Term>
            </dl>
          </section>
        </div>
        <section className="mt-[26px] border border-[#6e6e6e] pb-5 pl-[35px] pr-[29px]">
          <header className="flex items-center justify-between pr-[10px]">
            <h2 className="font-['Liberation_Sans',sans-serif] text-[26px] leading-[66px]">Contact Lenses - Shopping Cart</h2>
            <a href="#" className="text-[#0f6e96] underline">Continue Shopping</a>
          </header>
          <h3 className="bg-[#6e6e6e] px-[30px] py-[10px] text-[#e6e6e6]">Contact Lens Order 1 of 1</h3>
          <div className="border-b border-[#b3b3b3] whitespace-nowrap">
            {orderDump.map((line) => (
              <p key={line}>{line}</p>
            ))}
          </div>
        </section>
      </div>
    </main>
  );
}

function Scrollbar() {
  return (
    <div className="flex w-[14px] shrink-0 flex-col border-l border-[#b5b5b5] bg-linear-to-r from-[#d0d0d0] to-[#ececec] px-px">
      <div className="flex-[253]" />
      <div className="flex-[327] rounded-md border border-[#8f8f8f] bg-linear-to-r from-[#e8e8e8] to-[#cfcfcf]" />
    </div>
  );
}

/* ---------- desktop panel ---------- */
function Taskbar() {
  return (
    <footer className="flex h-7 shrink-0 items-center border-t border-[#666] bg-linear-to-b from-[#4a4a4a] to-[#383838] pl-1 text-[#e6e6e6]">
      <button className="flex items-center gap-[7px] font-bold text-[#d0d0d0]">
        <MintMenuIcon />
        Menu
      </button>
      <div className="ml-[11px] flex items-center">
        <button aria-label="Show desktop"><DesktopIcon /></button>
        <button aria-label="Firefox" className="ml-[11px]"><FirefoxIcon size={18} /></button>
        <button aria-label="Terminal" className="ml-1"><TerminalIcon size={18} /></button>
        <button aria-label="Files" className="ml-1"><FolderIcon /></button>
      </div>
      <div className="ml-[14px] flex h-full flex-1 gap-1 pt-px">
        {tasks.map(([Icon, label, active]) => (
          <button
            key={label}
            className={`flex min-w-0 max-w-[107px] flex-1 items-center gap-[2px] overflow-hidden whitespace-nowrap rounded-t-sm border border-b-0 pl-[7px] ${
              active ? "border-[#7a7a7a] bg-linear-to-b from-[#7c7c7c] to-[#555]" : "border-[#4e4e4e] bg-linear-to-b from-[#505050] to-[#3b3b3b]"
            }`}
          >
            <Icon />
            {label}
          </button>
        ))}
      </div>
      <div className="flex items-center gap-[3px] pr-1">
        <div className="flex gap-1">
          <UserTrayIcon />
          <DiskTrayIcon />
          <PlugTrayIcon />
          <SoundTrayIcon />
        </div>
        <FlameTrayIcon />
        <SkypeTrayIcon />
        <time className="font-bold text-[#d0d0d0]">15:48</time>
        <WindowsTrayIcon />
      </div>
    </footer>
  );
}

export default function App() {
  return (
    <div className="flex h-screen flex-col overflow-hidden font-['Noto_Sans',sans-serif] text-[12px] text-[#222]">
      <TitleBar />
      <Tabs />
      <NavBar />
      <Toolbars />
      <div className="flex min-h-0 flex-1">
        <Page />
        <Scrollbar />
      </div>
      <Taskbar />
    </div>
  );
}
